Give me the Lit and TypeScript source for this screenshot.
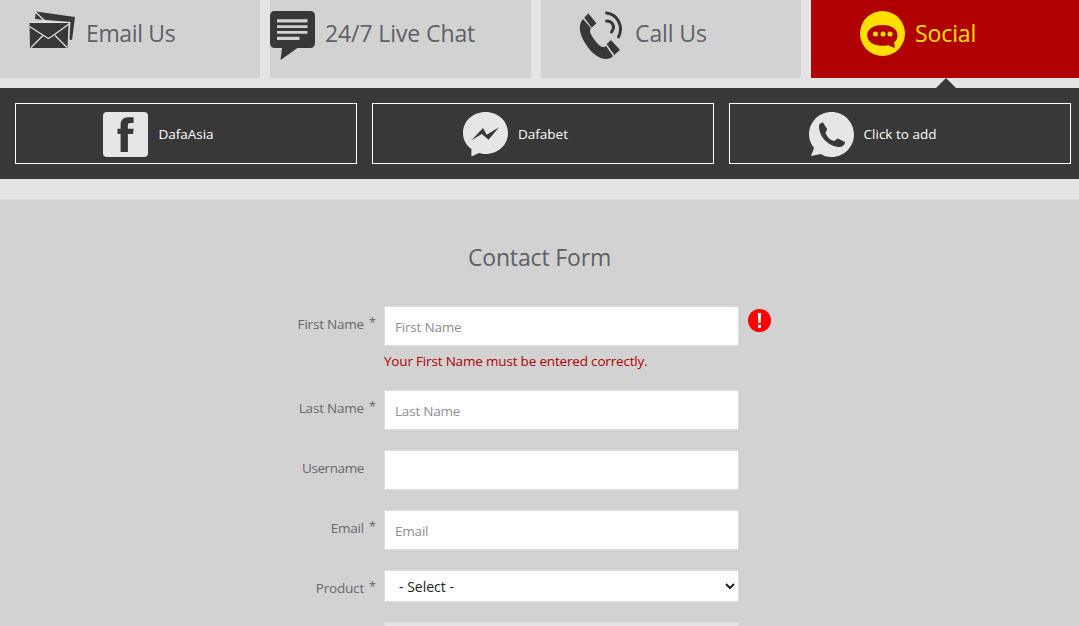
import { LitElement, html, css } from "lit";
import { customElement } from "lit/decorators.js";

const mailIcon = html`<svg class="ico" viewBox="0 0 46 38" width="46" height="38">
  <path fill="#383838" d="M7 0.500 46 6 43 29 40.500 28.500 41.500 11 6 8Z"/>
  <path fill="#383838" d="M0.500 12H39.500L38.500 37H1Z"/>
  <path fill="none" stroke="#e4e4e4" stroke-width="1.200" d="M0.500 15.500 17 26 19.500 27.500 22 26 40 13M2 36.500 14 24.500M38 36.500 26 24.500M0 11.500H41M6.500 1 17 11"/>
</svg>`;
const chatIcon = html`<svg class="ico" viewBox="0 0 45 49" width="45" height="49">
  <path fill="#383838" d="M5 0H40Q45 0 45 5V32Q45 37 40 37H27.500L10.500 49 12 37H5Q0 37 0 32V5Q0 0 5 0Z"/>
  <path fill="#d2d2d2" d="M7 8.300H37.500V11.500H7ZM7 14.300H37.500V17H7ZM7 20H37.500V22.700H7ZM7 25.700H29.500V29H7Z"/>
</svg>`;
const phoneIcon = html`<svg class="ico" viewBox="0 0 46 49" width="46" height="49">
  <path fill="#383838" d="M4 8C-1 14 0 22 6 32 12 42 20 48 27 48 30 48 33 47 34 45L27 35C25 37 22 36 20 34 16 30 12 24 11 21 11 19 11.500 17.500 12 17Z"/>
  <path fill="#383838" stroke="#d2d2d2" stroke-width="1" d="M9.300 1.800 18 12.300 12.700 17.200 4.800 6.700ZM32 28.500 41.500 39 35.300 44.500 27.200 33.300Z"/>
  <path fill="none" stroke="#383838" stroke-width="3" stroke-linecap="round" d="M27.500 2C38 3 45 15 39.500 26M27.500 10C33 10 37 15 32.500 21"/>
</svg>`;
const socialIcon = html`<svg class="ico" viewBox="0 0 45 45" width="45" height="45">
  <circle cx="22.500" cy="22.500" r="22.500" fill="#ffe000"/>
  <path fill="#b00000" d="M22.300 14C32 14 37.500 18.500 37.500 24.500 37.500 27.500 36 30 34 31.500L35 37 28 34.200C26 34.700 24 34.700 22.300 34.700 13 34.700 7.200 30 7.200 24.500 7.200 18.500 13 14 22.300 14Z"/>
  <circle cx="15.500" cy="23" r="2.500" fill="#ffe000"/><circle cx="23" cy="23" r="2.500" fill="#ffe000"/><circle cx="30" cy="23" r="2.500" fill="#ffe000"/>
</svg>`;
const fbIcon = html`<svg viewBox="0 0 45 45" width="45" height="45">
  <rect width="45" height="45" rx="4" fill="#e6e6e8"/>
  <path fill="#383838" d="M17.600 40V22H14.500V16.700H17.600V13Q17.600 5.300 25 5.300H30.600V11H27Q24.900 11 24.900 13V16.700H30.600L30 22H24.900V40Z"/>
</svg>`;
const msIcon = html`<svg viewBox="0 0 45 45" width="45" height="45">
  <path fill="#e6e6e8" d="M22.500 0C35 0 45 9 45 21S35 42 22.500 42C20 42 18 41.500 16 41L8.400 44.500V37C3 33 0 27.500 0 21 0 9 10 0 22.500 0Z"/>
  <path fill="#383838" d="M8.400 28.300 20 16 23.700 22.700 36 15.300 25.600 27.700 18.800 22Z"/>
</svg>`;
const waIcon = html`<svg viewBox="0 0 45 45" width="45" height="45">
  <path fill="#e6e6e8" d="M22.500 0C35 0 45 10 45 22.500S35 45 22.500 45C18 45 14.500 44 12 42L2 44 5 36C2 32 0 28 0 22.500 0 10 10 0 22.500 0Z"/>
  <path fill="#383838" d="M10 14C10 12 12 10.500 14 10.500L18 17C18 19 16.500 20 16.500 21 18 25 21 28 25 29 26 29 27.500 26.500 29 26.500L36 30C36 33 33 35 30 35 19 34 10 25 10 14Z"/>
</svg>`;

@customElement("app-root")
export class AppRoot extends LitElement {
  static styles = css`
    :host { display: block; height: 626px; overflow: hidden; background: #e4e4e6; font-family: "Open Sans", "Noto Sans", sans-serif; color: #5f5f66; }
    .tabs { display: grid; grid-template-columns: 260px 261px 260px 268px; column-gap: 10px; height: 78px; }
    .tab { display: flex; align-items: flex-start; background: #d2d2d2; font-size: 23px; line-height: 45px; letter-spacing: -0.1px; gap: 10px; height: 78px; box-sizing: border-box; padding-top: 11px; }
    .t1 { padding-left: 29px; letter-spacing: -0.35px; }
    .t1 span { margin-left: 1px; }
    .t2 { padding-left: 0; }
    .t3 { padding-left: 38px; }
    .t4 { padding-left: 49px; background: #b00000; color: #ffe000; position: relative; }
    .arrow { position: absolute; left: 125px; bottom: -10px; border: 10px solid transparent; border-top: 0; border-bottom-color: #383838; }
    .ico { flex: none; }
    .bar { margin-top: 10px; height: 91px; background: #383838; box-sizing: border-box; padding: 15px 8px 15px 15px; display: grid; grid-template-columns: repeat(3, 342px); column-gap: 15px; }
    .btn { display: flex; align-items: center; justify-content: center; gap: 10px; border: 1px solid #fff; padding-right: 55px; box-sizing: border-box; height: 61px; color: #fff; font-size: 13.500px; }
    .btn svg { flex: none; margin-top: 1px; }
    .form { margin-top: 20px; background: #d2d2d2; height: 427px; border-top: 1px solid #dadada; box-sizing: border-box; }
    h1 { margin: 0; padding-top: 40px; height: 106px; box-sizing: border-box; text-align: center; font-weight: 400; font-size: 23px; line-height: 34px; color: #5f5f66; letter-spacing: -0.15px; }
    .row { display: grid; grid-template-columns: 364px 20px 355px auto; margin-bottom: 20px; }
    .row.err { margin-bottom: 19px; }
    .lab { text-align: right; font-size: 13.500px; line-height: 36px; letter-spacing: -0.2px; color: #68686e; }
    .lab.tight { letter-spacing: -0.4px; }
    .star { font-size: 12.500px; line-height: 33px; padding-left: 5px; color: #68686e; }
    input, select { display: block; width: 355px; box-sizing: border-box; border: 1px solid #dcdcdc; background: #fff; height: 40px; padding: 2px 10px 0; font: 13.500px "Open Sans", sans-serif; letter-spacing: -0.2px; outline: 0; border-radius: 0; margin: 0; }
    input::placeholder { color: #8d8d93; opacity: 1; }
    select { height: 32px; padding: 1px 10px 0; color: #222; letter-spacing: 0; font-size: 14px; }
    .msg { font-size: 13.500px; line-height: 20px; margin-top: 5px; letter-spacing: -0.18px; color: #b00000; }
    .alert { width: 23px; height: 23px; margin: 3px 0 0 9px; }
    input.off { background: #e4e4e4; }
    .sel { height: 32px; }
  `;

  render() {
    return html`
      <div class="tabs">
        <div class="tab t1">${mailIcon}<span>Email Us</span></div>
        <div class="tab t2">${chatIcon}<span>24/7 Live Chat</span></div>
        <div class="tab t3">${phoneIcon}<span>Call Us</span></div>
        <div class="tab t4">${socialIcon}<span>Social</span><i class="arrow"></i></div>
      </div>
      <div class="bar">
        <div class="btn">${fbIcon}<span>DafaAsia</span></div>
        <div class="btn">${msIcon}<span>Dafabet</span></div>
        <div class="btn">${waIcon}<span>Click to add</span></div>
      </div>
      <div class="form">
        <h1>Contact Form</h1>
        <div class="row err">
          <div class="lab">First Name</div><div class="star">*</div>
          <div><input placeholder="First Name" /><div class="msg">Your First Name must be entered correctly.</div></div>
          <svg class="alert" viewBox="0 0 23 23"><circle cx="11.500" cy="11.500" r="11.500" fill="#f00"/><path fill="#fff" d="M9.800 4H13.200L12.600 14H10.400ZM10 15.800H13V18.800H10Z"/></svg>
        </div>
        <div class="row"><div class="lab">Last Name</div><div class="star">*</div><input placeholder="Last Name" /></div>
        <div class="row"><div class="lab tight">Username</div><div class="star"></div><input /></div>
        <div class="row"><div class="lab">Email</div><div class="star">*</div><input placeholder="Email" /></div>
        <div class="row sel"><div class="lab">Product</div><div class="star">*</div><select><option>- Select -</option></select></div>
        <div class="row"><div class="lab"></div><div class="star"></div><input class="off" disabled /></div>
      </div>
    `;
  }
}
